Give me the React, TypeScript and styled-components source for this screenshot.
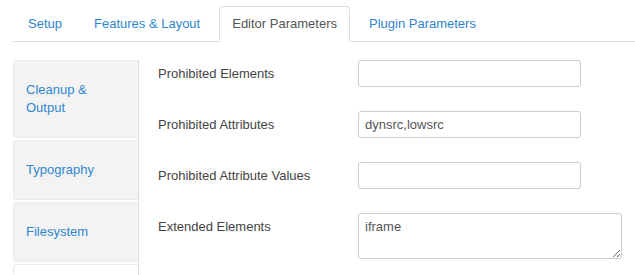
import styled, { createGlobalStyle } from "styled-components";

const GlobalStyle = createGlobalStyle`
  body {
    margin: 0;
    background: #fff;
    font-family: "Liberation Sans", Arial, sans-serif;
    font-size: 13px;
    line-height: 18px;
    color: #444;
  }
`;

const topTabs = ["Setup", "Features & Layout", "Editor Parameters", "Plugin Parameters"];
const sideTabs = ["Cleanup & Output", "Typography", "Filesystem"];

const fields = [
  { label: "Prohibited Elements", value: "" },
  { label: "Prohibited Attributes", value: "dynsrc,lowsrc" },
  { label: "Prohibited Attribute Values", value: "" },
];

const App = () => {
  return (
    <Page>
      <GlobalStyle />
      <TabBar>
        {topTabs.map((t) => (
          <TopTab key={t} $active={t === "Editor Parameters"}>
            {t}
          </TopTab>
        ))}
      </TabBar>

      <Body>
        <SideNav>
          {sideTabs.map((t) => (
            <SideTab key={t}>{t}</SideTab>
          ))}
          {/* next tab, only its top edge is visible */}
          <SideTabStub />
        </SideNav>

        <Form>
          {fields.map((f) => (
            <Row key={f.label}>
              <Label>{f.label}</Label>
              <TextInput type="text" defaultValue={f.value} />
            </Row>
          ))}
          <Row>
            <Label>Extended Elements</Label>
            <TextArea defaultValue="iframe" />
          </Row>
        </Form>
      </Body>
    </Page>
  );
};

const Page = styled.div`
  padding-top: 6px;
  height: 269px;
  overflow: hidden;
`;

const TabBar = styled.div`
  display: flex;
  gap: 6px;
  margin-left: 13px;
  padding-left: 2px;
  border-bottom: 1px solid #ddd;
`;

const TopTab = styled.div<{ $active?: boolean }>`
  padding: 8px 12px;
  margin-bottom: -1px;
  border: 1px solid ${(p) => (p.$active ? "#ddd" : "transparent")};
  border-bottom-color: ${(p) => (p.$active ? "#fff" : "transparent")};
  border-radius: 4px 4px 0 0;
  background: ${(p) => (p.$active ? "#fff" : "transparent")};
  color: ${(p) => (p.$active ? "#555" : "#2f86d0")};
  white-space: nowrap;
`;

const Body = styled.div`
  display: flex;
  margin-top: 18px;
`;

const SideNav = styled.div`
  width: 125px;
  margin-left: 13px;
  border-right: 1px solid #ddd;
  display: flex;
  flex-direction: column;
  gap: 2px;
`;

const SideTab = styled.div`
  padding: 20px 12px;
  border: 1px solid #ebebeb;
  border-right: none;
  border-radius: 4px 0 0 4px;
  background: #f3f3f3;
  color: #2f86d0;
`;

const SideTabStub = styled.div`
  height: 40px;
  border: 1px solid #ebebeb;
  border-right: none;
  border-radius: 4px 0 0 4px;
  background: #fff;
`;

const Form = styled.div`
  flex: 1;
  padding-left: 19px;
  display: flex;
  flex-direction: column;
  gap: 24px;
`;

const Row = styled.div`
  display: flex;
  align-items: flex-start;
`;

const Label = styled.div`
  width: 200px;
  padding-top: 5px;
  color: #444;
`;

const TextInput = styled.input`
  box-sizing: border-box;
  width: 223px;
  height: 27px;
  padding: 4px 6px;
  border: 1px solid #ccc;
  border-radius: 3px;
  font-family: inherit;
  font-size: 13px;
  color: #555;
  outline: none;
`;

const TextArea = styled.textarea`
  box-sizing: border-box;
  width: 264px;
  height: 46px;
  padding: 4px 6px;
  border: 1px solid #ccc;
  border-radius: 3px;
  font-family: inherit;
  font-size: 13px;
  line-height: 18px;
  color: #555;
  outline: none;
`;

export default App;
